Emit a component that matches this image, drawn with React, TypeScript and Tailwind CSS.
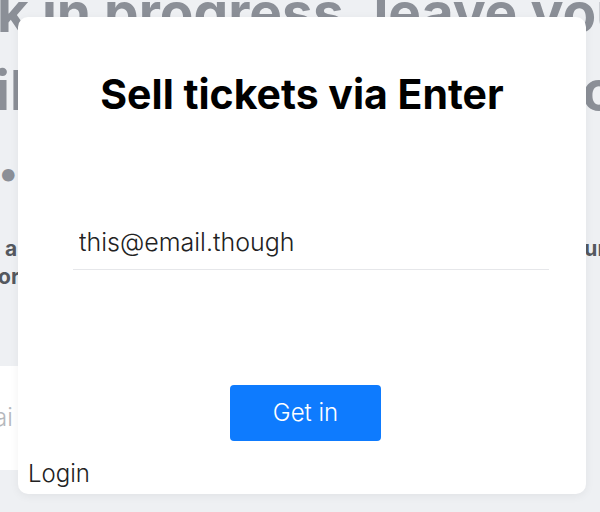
export default function App() {
  return (
    <div className="relative h-[512px] w-[600px] overflow-hidden bg-[#eef0f3] font-['Inter','Liberation_Sans',sans-serif]">
      {/* page behind the modal */}
      <div className="flex flex-col">
        <div className="-mt-[25px] -ml-[3px] whitespace-nowrap text-[55px] font-bold leading-[75px] text-[#8b8f97]">
          k in progress, leave you
        </div>
        <div className="mt-[10px] flex justify-between whitespace-nowrap text-[55px] font-bold leading-[60px] text-[#8b8f97]">
          <span className="-ml-[5px]">il</span>
          <span className="-mr-[50px]">ou</span>
        </div>
        <div className="mt-[33px] -ml-[3px] text-[40px] leading-[40px] text-[#8b8f97]">•</div>
        <div className="mt-[42px] flex justify-between whitespace-nowrap text-[21px] font-bold leading-[28px] text-[#55595f]">
          <span className="ml-[5px]">a</span>
          <span className="-mr-[6px]">ur</span>
        </div>
        <div className="whitespace-nowrap text-[21px] font-bold leading-[28px] text-[#55595f]">
          <span className="-ml-[2px]">or</span>
        </div>
        <div className="mt-[75px] flex h-[104px] w-[560px] items-center bg-white">
          <span className="-ml-[6px] text-[24px] font-light text-[#b5b8bd]">ai</span>
        </div>
      </div>

      {/* modal */}
      <div className="absolute left-[18px] top-[17px] flex h-[477px] w-[568px] flex-col rounded-[10px] bg-white shadow-[0_2px_10px_rgba(0,0,0,0.06)]">
        <h2 className="mt-[53px] text-center text-[41px] font-bold leading-[48px] text-black">
          Sell tickets via Enter
        </h2>
        <div className="ml-[55px] mr-[37px] mt-[109px] border-b border-[#e6e7ea] pb-[12px] pl-[6px]">
          <input
            className="w-full bg-transparent text-[25px] font-light leading-[30px] text-[#222] outline-none"
            defaultValue="this@email.though"
          />
        </div>
        <div className="mt-[115px] flex justify-center">
          <button className="ml-[7px] h-[56px] w-[151px] rounded-[4px] bg-[#0e7bfe] text-[24px] font-light text-white">
            Get in
          </button>
        </div>
        <div className="mt-[19px] ml-[10px] text-[24px] font-light leading-[28px] text-[#222]">Login</div>
      </div>
    </div>
  )
}
